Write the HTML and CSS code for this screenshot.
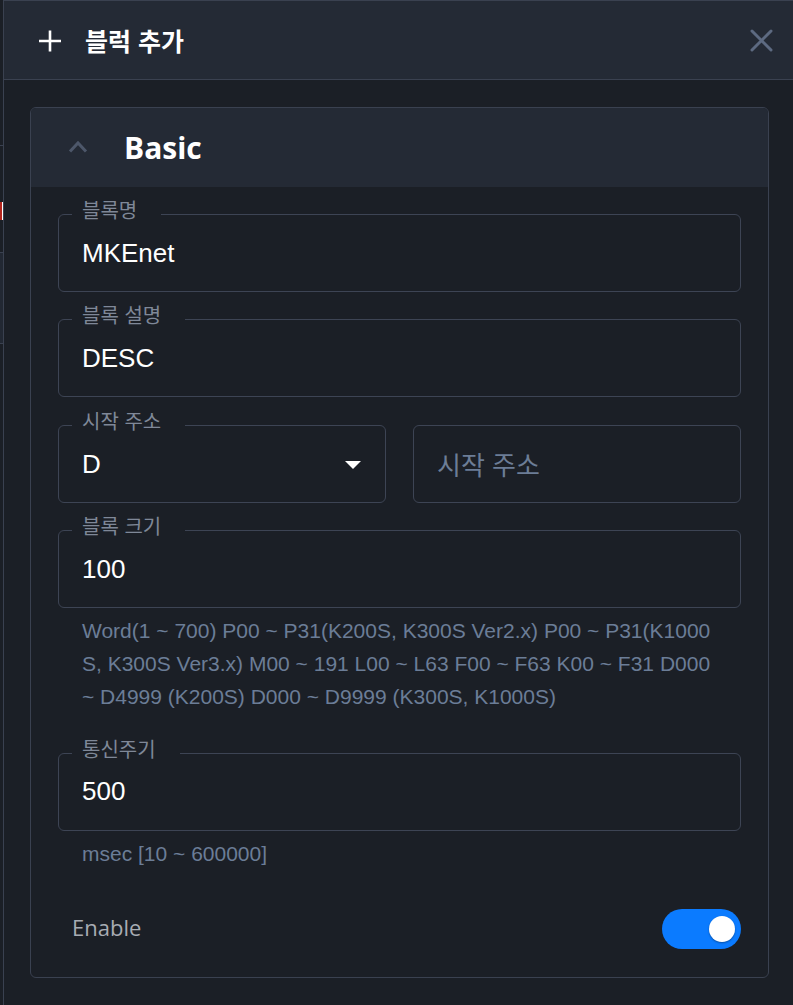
FILE: index.html
```html
<!DOCTYPE html>
<html lang="ko">
<head>
<meta charset="utf-8">
<title>블럭 추가</title>
<link rel="stylesheet" href="styles.css">
</head>
<body>
<div class="page">
  <div class="backdrop">
    <div class="bd-a"></div>
    <div class="bd-b"></div>
    <div class="bd-mark"></div>
    <div class="bd-c"></div>
    <div class="bd-d"></div>
  </div>
  <aside class="drawer">
    <header class="drawer-header">
      <svg class="icon-plus" width="24" height="24" viewBox="0 0 24 24" aria-hidden="true">
        <path d="M12 1.5V22.5M1 12H23" stroke="#ffffff" stroke-width="2.6" fill="none"/>
      </svg>
      <h1 class="drawer-title">블럭 추가</h1>
      <svg class="icon-close" width="23" height="23" viewBox="0 0 23 23" aria-hidden="true">
        <path d="M2 2L21 21M21 2L2 21" stroke="#5d6a81" stroke-width="3" stroke-linecap="round" fill="none"/>
      </svg>
    </header>
    <div class="drawer-body">
      <section class="card">
        <div class="card-header">
          <svg class="icon-chevron" width="20" height="13" viewBox="0 0 20 13" aria-hidden="true">
            <path d="M2 11.5L10 3L18 11.5" stroke="#4d576a" stroke-width="3" fill="none"/>
          </svg>
          <h2 class="card-title">Basic</h2>
        </div>
        <div class="card-body">
          <div class="field">
            <span class="field-label">블록명</span>
            <span class="field-value">MKEnet</span>
          </div>
          <div class="field">
            <span class="field-label">블록 설명</span>
            <span class="field-value">DESC</span>
          </div>
          <div class="field-row">
            <div class="field select">
              <span class="field-label">시작 주소</span>
              <span class="field-value">D</span>
              <svg class="caret" width="16" height="8" viewBox="0 0 16 8" aria-hidden="true">
                <path d="M0 0H16L8 8Z" fill="#ffffff"/>
              </svg>
            </div>
            <div class="field">
              <span class="placeholder">시작 주소</span>
            </div>
          </div>
          <div class="field">
            <span class="field-label">블록 크기</span>
            <span class="field-value">100</span>
          </div>
          <p class="helper">Word(1 ~ 700) P00 ~ P31(K200S, K300S Ver2.x) P00 ~ P31(K1000S, K300S Ver3.x) M00 ~ 191 L00 ~ L63 F00 ~ F63 K00 ~ F31 D000 ~ D4999 (K200S) D000 ~ D9999 (K300S, K1000S)</p>
          <div class="field">
            <span class="field-label">통신주기</span>
            <span class="field-value">500</span>
          </div>
          <p class="helper">msec [10 ~ 600000]</p>
          <div class="switch-row">
            <span class="switch-label">Enable</span>
            <span class="switch on"><span class="knob"></span></span>
          </div>
        </div>
      </section>
    </div>
  </aside>
</div>
</body>
</html>
```

FILE: styles.css
```css
html, body {
  margin: 0;
  padding: 0;
  background: #1b1f26;
  height: 100%;
}
body {
  font-family: "Liberation Sans", "Noto Sans CJK KR", sans-serif;
  color: #ffffff;
  overflow: hidden;
}
.page {
  display: flex;
  height: 1005px;
}
.backdrop {
  width: 3px;
  display: flex;
  flex-direction: column;
  background: #1b1f26;
}
.bd-a {
  height: 145px;
  border-bottom: 1px solid #3a4150;
}
.bd-b {
  height: 56px;
}
.bd-mark {
  height: 18px;
  background: linear-gradient(90deg, #b3261e 0 2px, #ffffff 2px 3px);
}
.bd-c {
  height: 32px;
  border-bottom: 1px solid #3a4150;
}
.bd-d {
  height: 90px;
  background: #222833;
  border-bottom: 1px solid #3a4150;
}
.drawer {
  flex: 1;
  display: flex;
  flex-direction: column;
  border-left: 1px solid #3a4150;
  background: #1b1f26;
}
.drawer-header {
  height: 78px;
  display: flex;
  align-items: center;
  background: #242a35;
  border-top: 1px solid #3a4150;
  border-bottom: 1px solid #3a4150;
  padding: 0 20px 0 34px;
}
.icon-plus {
  flex: none;
  margin-top: 2px;
}
.drawer-title {
  margin: 0 0 0 23px;
  flex: 1;
  font-family: "Noto Sans CJK KR", sans-serif;
  font-weight: 700;
  font-size: 25px;
  line-height: 1;
  color: #ffffff;
}
.icon-close {
  flex: none;
}
.drawer-body {
  padding: 27px 24px 0 26px;
}
.card {
  border: 1px solid #3a4150;
  border-radius: 6px;
  overflow: hidden;
  background: #1b1f26;
}
.card-header {
  height: 79px;
  display: flex;
  align-items: center;
  background: #242a35;
  padding-left: 37px;
}
.icon-chevron {
  flex: none;
  margin-top: -2px;
}
.card-title {
  margin: 0 0 0 36px;
  font-family: "Open Sans", "Noto Sans", sans-serif;
  font-weight: 700;
  font-size: 30px;
  line-height: 1;
  color: #ffffff;
}
.card-body {
  display: flex;
  flex-direction: column;
  padding: 27px 27px 28px 27px;
}
.field {
  position: relative;
  box-sizing: border-box;
  height: 78px;
  border: 1px solid #3d4454;
  border-radius: 6px;
  display: flex;
  align-items: center;
  padding: 0 23px;
  margin-bottom: 27px;
}
.field-label {
  position: absolute;
  top: -16px;
  left: 13px;
  padding: 0 24px 0 10px;
  background: #1b1f26;
  font-family: "Noto Sans CJK KR", sans-serif;
  font-size: 20px;
  line-height: 22px;
  color: #7f8898;
}
.field-value {
  font-family: "Liberation Sans", sans-serif;
  font-size: 26px;
  color: #ffffff;
}
.placeholder {
  font-family: "Noto Sans CJK KR", sans-serif;
  font-size: 26px;
  color: #6c7d96;
  margin-top: -2px;
}
.field-row {
  display: grid;
  grid-template-columns: 1fr 1fr;
  column-gap: 27px;
  margin-top: 1px;
}
.field.select {
  justify-content: space-between;
  padding-right: 24px;
}
.caret {
  flex: none;
  margin-top: 1px;
}
.helper {
  margin: -21px 24px 39px 24px;
  font-family: "Liberation Sans", sans-serif;
  font-size: 21px;
  line-height: 33.2px;
  color: #6b7d97;
  word-break: break-all;
}
.switch-row {
  display: flex;
  align-items: center;
  justify-content: space-between;
  padding-left: 14px;
}
.switch-label {
  font-family: "Open Sans", "Noto Sans", sans-serif;
  font-size: 22px;
  color: #a8acb3;
  margin-top: -3px;
}
.switch {
  position: relative;
  width: 79px;
  height: 40px;
  border-radius: 20px;
  background: #2a303b;
}
.switch.on {
  background: #0b7bff;
}
.knob {
  position: absolute;
  top: 7px;
  right: 6px;
  width: 26px;
  height: 26px;
  border-radius: 50%;
  background: #ffffff;
  box-shadow: 0 1px 2px rgba(0, 0, 0, 0.35);
}
```
